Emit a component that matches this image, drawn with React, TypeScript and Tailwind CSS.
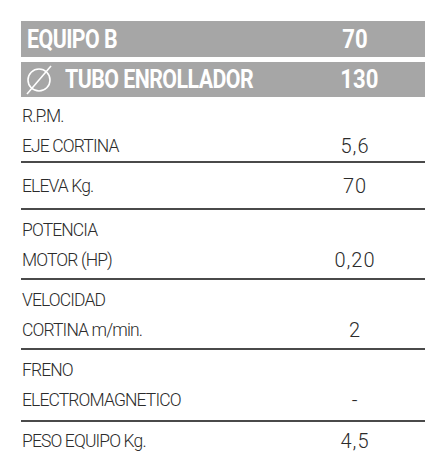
const rows = [
  { label: ["R.P.M.", "EJE CORTINA"], value: "5,6", pad: "pt-[4px] pb-0" },
  { label: ["ELEVA Kg."], value: "70", pad: "pt-[8px] pb-[7px]" },
  { label: ["POTENCIA", "MOTOR (HP)"], value: "0,20", pad: "pt-[5px] pb-[3px]" },
  { label: ["VELOCIDAD", "CORTINA m/min."], value: "2", pad: "pt-[5px] pb-[3px]" },
  { label: ["FRENO", "ELECTROMAGNETICO"], value: "-", pad: "pt-[5px] pb-[5px]" },
  { label: ["PESO EQUIPO Kg."], value: "4,5", pad: "pt-[4px] pb-[4px]" },
];

function DiameterIcon() {
  return (
    <svg width="28" height="32" viewBox="0 0 28 32" fill="none" stroke="white" strokeWidth="1.6">
      <circle cx="14" cy="16" r="11" />
      <line x1="2" y1="30" x2="26" y2="2" />
    </svg>
  );
}

export default function App() {
  return (
    <div className="w-[446px] h-[475px] bg-white pt-[21px] px-[21px]">
      {/* header bars */}
      <div className="font-['Roboto','Liberation_Sans',sans-serif] font-bold text-white text-[26px] whitespace-nowrap">
        <div className="flex items-center h-[36px] bg-[#a6a6a6]">
          <div className="flex-1 pl-[6px]">
            <span className="inline-block scale-x-[0.82] origin-left tracking-tight">EQUIPO B</span>
          </div>
          <div className="w-[140px] text-center">
            <span className="inline-block scale-x-[0.85]">70</span>
          </div>
        </div>
        <div className="flex items-center h-[35px] mt-[5px] bg-[#a6a6a6]">
          <div className="flex-1 flex items-center pl-[4px] gap-[12px]">
            <DiameterIcon />
            <span className="inline-block scale-x-[0.82] origin-left tracking-tight">TUBO ENROLLADOR</span>
          </div>
          <div className="w-[140px] text-center">
            <span className="inline-block scale-x-[0.85]">130</span>
          </div>
        </div>
      </div>

      {/* spec rows */}
      <div className="font-['Roboto','Liberation_Sans',sans-serif] font-light text-[#2b2b2b] text-[17.5px] tracking-tighter">
        {rows.map((r, i) => (
          <div
            key={i}
            className={`flex items-end ${r.pad} ${i < rows.length - 1 ? "border-b-2 border-[#4a4a4a]" : ""}`}
          >
            <div className="flex-1 pl-[1px]">
              {r.label.map((l) => (
                <div key={l} className="leading-[30px]">
                  {l}
                </div>
              ))}
            </div>
            <div className="w-[140px] text-center leading-[30px] text-[20px] tracking-[1px]">{r.value}</div>
          </div>
        ))}
      </div>
    </div>
  );
}
